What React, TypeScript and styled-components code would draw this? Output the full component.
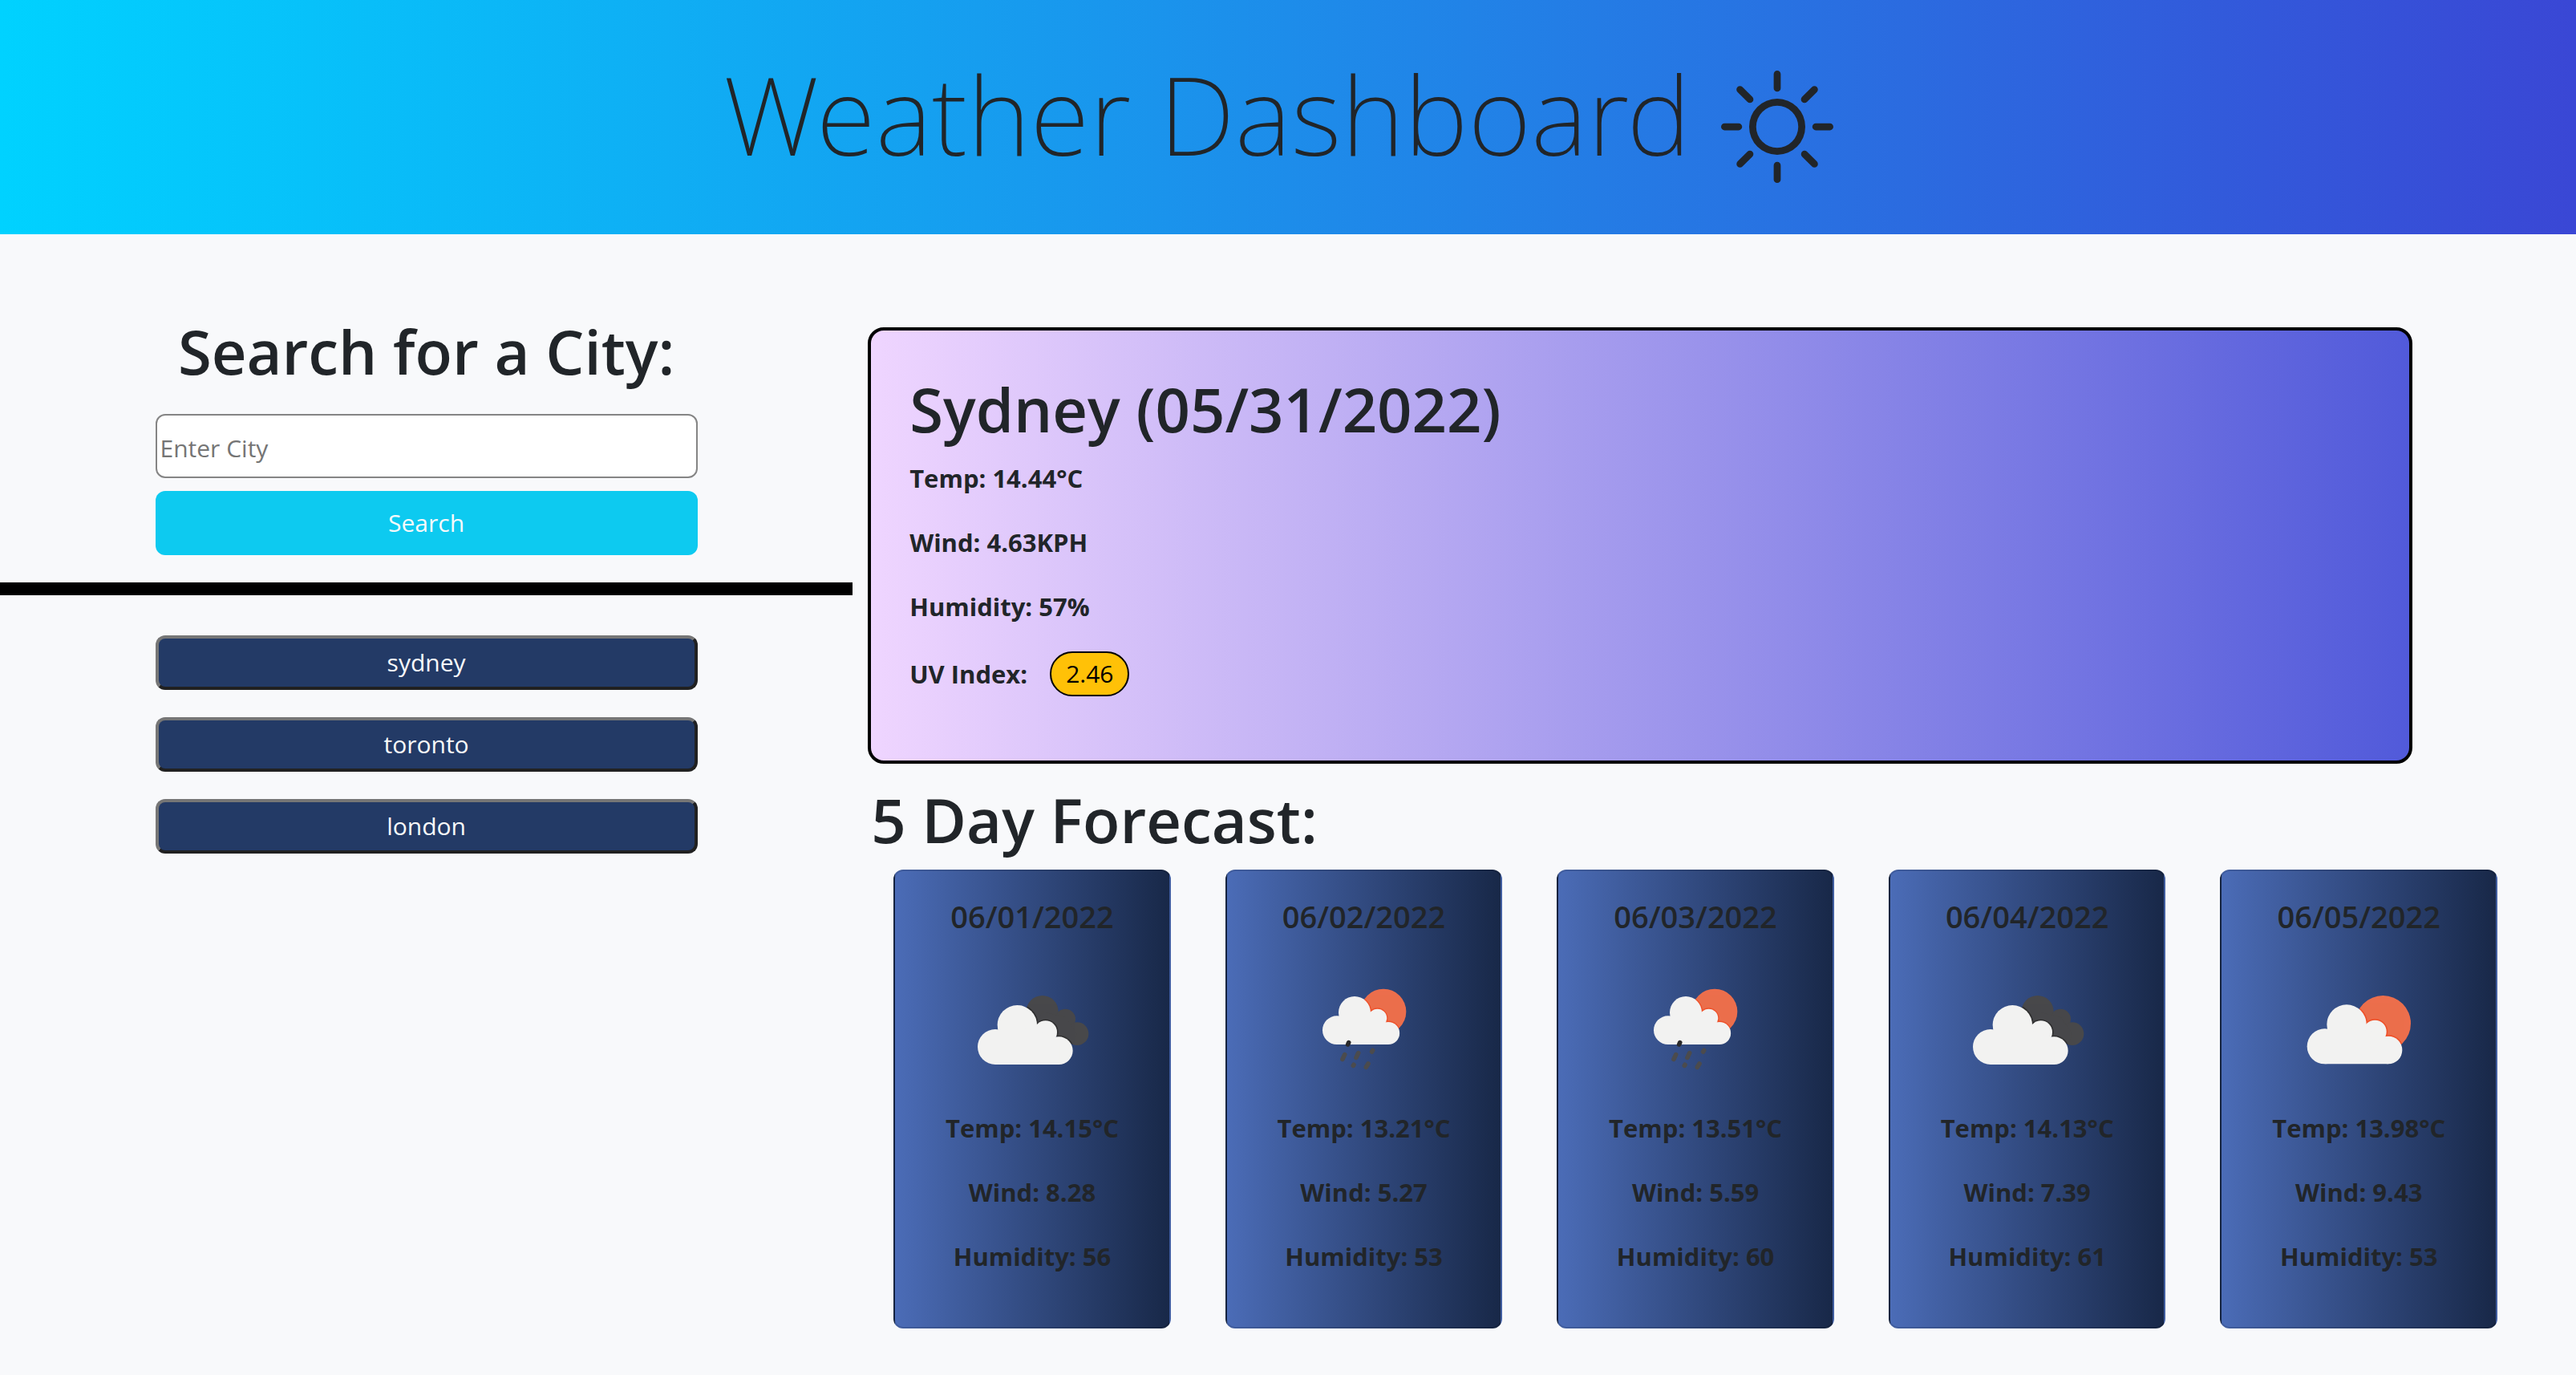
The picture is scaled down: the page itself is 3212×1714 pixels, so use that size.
import React from "react";
import styled, { createGlobalStyle } from "styled-components";
import { BsSun } from "react-icons/bs";

const GlobalStyle = createGlobalStyle`
  *, *::before, *::after { box-sizing: border-box; }
  body {
    margin: 0;
    background: #f8f9fb;
    color: #212529;
    font-family: "Open Sans", "Noto Sans", sans-serif;
    font-size: 30px;
    line-height: 48px;
  }
  h1, h2, h3, p, ul { margin: 0; padding: 0; }
`;

const Header = styled.header`
  display: flex;
  justify-content: center;
  padding: 56px 24px 64px 0;
  background: linear-gradient(90deg, #00d2ff, #3a47d5);
`;

const Title = styled.h1`
  display: flex;
  align-items: center;
  gap: 38px;
  font-family: "Noto Sans", "Open Sans", sans-serif;
  font-size: 135px;
  font-weight: 200;
  line-height: 172px;

  svg {
    width: 140px;
    height: 140px;
    margin-top: 32px;
  }
`;

const Layout = styled.main`
  display: grid;
  grid-template-columns: 33.1% 66.9%;
  padding-top: 96px;
`;

const Sidebar = styled.aside`
  display: flex;
  flex-direction: column;
`;

const SearchForm = styled.form`
  display: flex;
  flex-direction: column;
  gap: 16px;
  width: 63.6%;
  margin: 0 auto;
`;

const Heading = styled.h2`
  font-size: 76px;
  font-weight: 600;
  line-height: 100px;
  white-space: nowrap;
`;

const SearchHeading = styled(Heading)`
  margin-bottom: 12px;
  text-align: center;
`;

const CityInput = styled.input`
  height: 80px;
  padding: 4px 4px 0;
  border: 2px solid #858585;
  border-radius: 12px;
  background: #fff;
  color: #212529;
  font: inherit;

  &::placeholder { color: #757575; opacity: 1; }
`;

const SearchButton = styled.button`
  height: 80px;
  border: 0;
  border-radius: 12px;
  background: #0dcaf0;
  color: #f8f9fa;
  font: inherit;
`;

const Divider = styled.hr`
  width: 100%;
  height: 16px;
  margin: 34px 0 50px;
  border: 0;
  background: #000;
`;

const History = styled.ul`
  display: flex;
  flex-direction: column;
  gap: 34px;
  width: 63.6%;
  margin: 0 auto;
  list-style: none;
`;

const HistoryButton = styled.button`
  display: block;
  width: 100%;
  height: 68px;
  padding: 0;
  border: 4px solid;
  border-color: #767676 #212121 #212121 #767676;
  border-radius: 12px;
  background: #233a66;
  color: #f8f9fa;
  font: inherit;
`;

const Results = styled.div`
  display: flex;
  flex-direction: column;
  padding: 20px 98px 58px 19px;
`;

const Current = styled.section`
  display: flex;
  flex-direction: column;
  margin-right: 106px;
  padding: 48px 48px 80px;
  border: 4px solid #000;
  border-radius: 20px;
  background: linear-gradient(90deg, #efd5ff, #515ada);
`;

const CityName = styled(Heading)`
  margin-bottom: 12px;
`;

const Stat = styled.p`
  margin-bottom: 32px;
  font-size: 31px;
  font-weight: 700;
`;

const UvStat = styled.p`
  display: flex;
  align-items: center;
  gap: 28px;
  font-size: 31px;
  font-weight: 700;
`;

const UvBadge = styled.span`
  padding: 2px 18px;
  border: 2px solid #000;
  border-radius: 28px;
  background: #ffc107;
  color: #000;
  font-size: 30px;
  font-weight: 400;
`;

const ForecastHeading = styled(Heading)`
  margin: 20px 0 12px 4px;
`;

const ForecastList = styled.ul`
  display: flex;
  gap: 68px;
  padding-left: 32px;
  list-style: none;
`;

const DayCard = styled.li`
  display: flex;
  flex: 1;
  flex-direction: column;
  align-items: center;
  padding: 32px 0;
  border: 2px solid rgba(0, 0, 0, 0.125);
  border-radius: 12px;
  background: linear-gradient(90deg, #4b6cb7, #182848);
`;

const DayDate = styled.h3`
  margin-bottom: 16px;
  font-size: 38px;
  font-weight: 600;
  line-height: 48px;
`;

const Picture = styled.svg`
  width: 200px;
  height: 200px;
`;

const CloudShape = () => (
  <>
    <circle cx="180" cy="312" r="66" />
    <circle cx="262" cy="230" r="74" />
    <circle cx="368" cy="257" r="43" />
    <circle cx="418" cy="326" r="52" />
    <path d="M180 378V290L262 240L368 257L418 300V378Z" />
  </>
);

const DarkCloudShape = () => (
  <>
    <circle cx="356" cy="180" r="60" />
    <circle cx="442" cy="208" r="38" />
    <circle cx="486" cy="263" r="43" />
    <path d="M356 180L442 200L486 263L470 300L400 270L330 230Z" />
  </>
);

type Sky = "broken" | "rain" | "few";

const SHAPES: Record<Sky, { viewBox: string; cloud: string; shade: string; sun?: [number, number, number] }> = {
  broken: { viewBox: "18 -57 600 600", cloud: "translate(0 0)", shade: "#262626" },
  rain: { viewBox: "0 -57 600 600", cloud: "translate(51.7 -3.2) scale(.81)", shade: "#f0441c", sun: [372, 180, 85] },
  few: { viewBox: "3 -57 600 600", cloud: "translate(-4 -2)", shade: "#f0441c", sun: [394, 224, 104] },
};

const SkyIcon = ({ sky, id }: { sky: Sky; id: string }) => {
  const { viewBox, cloud, shade, sun } = SHAPES[sky];
  const back = sun ? <circle cx={sun[0]} cy={sun[1]} r={sun[2]} /> : <DarkCloudShape />;
  return (
    <Picture viewBox={viewBox} aria-hidden="true">
      <clipPath id={id}>{back}</clipPath>
      <g fill={sun ? "#ec6e4c" : "#48484a"}>{back}</g>
      <g clipPath={`url(#${id})`}>
        <g transform={cloud} fill={shade} stroke={shade} strokeWidth="10" opacity="0.7">
          <CloudShape />
        </g>
      </g>
      <g transform={cloud} fill="#f2f2f1">
        <CloudShape />
      </g>
      {sky === "rain" && (
        <g stroke="#4b4b4d" strokeWidth="17" strokeLinecap="round">
          <path d="M227 341L219 358M278 335L270 352M332 325L329 330M261 379L259 382M315 375L307 388" />
          <path d="M242 296L239 303" stroke="#2a2a2b" />
        </g>
      )}
    </Picture>
  );
};

const HISTORY = ["sydney", "toronto", "london"];

const FORECAST: { date: string; sky: Sky; temp: string; wind: string; humidity: number }[] = [
  { date: "06/01/2022", sky: "broken", temp: "14.15", wind: "8.28", humidity: 56 },
  { date: "06/02/2022", sky: "rain", temp: "13.21", wind: "5.27", humidity: 53 },
  { date: "06/03/2022", sky: "rain", temp: "13.51", wind: "5.59", humidity: 60 },
  { date: "06/04/2022", sky: "broken", temp: "14.13", wind: "7.39", humidity: 61 },
  { date: "06/05/2022", sky: "few", temp: "13.98", wind: "9.43", humidity: 53 },
];

export default function App() {
  return (
    <>
      <GlobalStyle />
      <Header>
        <Title>
          Weather Dashboard
          <BsSun aria-hidden="true" />
        </Title>
      </Header>
      <Layout>
        <Sidebar>
          <SearchForm onSubmit={(e) => e.preventDefault()}>
            <SearchHeading>
              <label htmlFor="city">Search for a City:</label>
            </SearchHeading>
            <CityInput id="city" type="text" placeholder="Enter City" />
            <SearchButton type="submit">Search</SearchButton>
          </SearchForm>
          <Divider />
          <History>
            {HISTORY.map((city) => (
              <li key={city}>
                <HistoryButton type="button">{city}</HistoryButton>
              </li>
            ))}
          </History>
        </Sidebar>
        <Results>
          <Current>
            <CityName>Sydney (05/31/2022)</CityName>
            <Stat>Temp: 14.44°C</Stat>
            <Stat>Wind: 4.63KPH</Stat>
            <Stat>Humidity: 57%</Stat>
            <UvStat>
              UV Index: <UvBadge>2.46</UvBadge>
            </UvStat>
          </Current>
          <ForecastHeading>5 Day Forecast:</ForecastHeading>
          <ForecastList>
            {FORECAST.map((day) => (
              <DayCard key={day.date}>
                <DayDate>{day.date}</DayDate>
                <SkyIcon sky={day.sky} id={`sky-${day.date.replace(/\//g, "")}`} />
                <Stat>Temp: {day.temp}°C</Stat>
                <Stat>Wind: {day.wind}</Stat>
                <Stat>Humidity: {day.humidity}</Stat>
              </DayCard>
            ))}
          </ForecastList>
        </Results>
      </Layout>
    </>
  );
}
